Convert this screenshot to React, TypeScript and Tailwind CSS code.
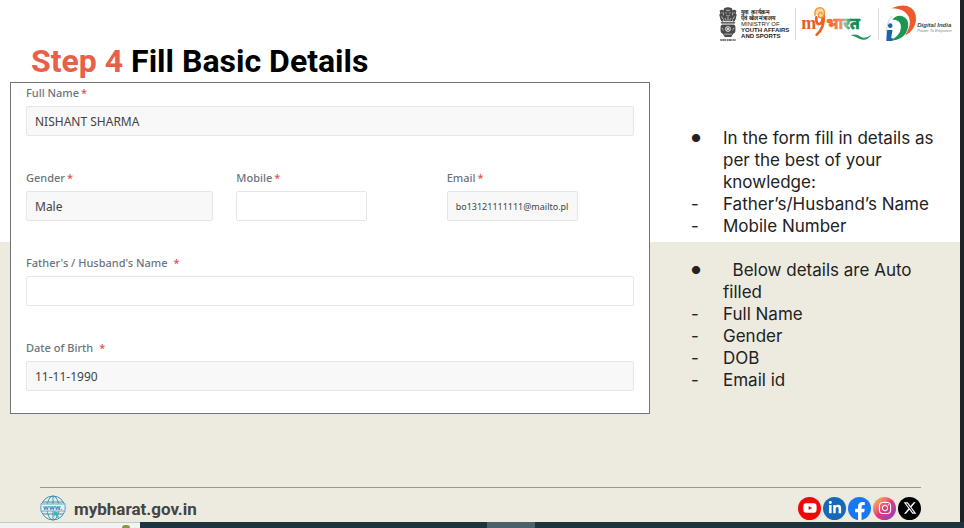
import React, { useState } from "react";
import { FaFacebookF, FaLinkedinIn, FaYoutube, FaInstagram } from "react-icons/fa";
import { FaXTwitter } from "react-icons/fa6";

const Emblem = () => (
  <svg viewBox="28 14 62 112" className="h-[37px] w-[20px]" fill="#4a4a4a" aria-hidden="true">
    <path d="M47 20q12-7 24 0l3 8-2 10 2 8-3 14H48l-4-14 2-8-2-10z" />
    <path d="M33 27q8-6 13 1l-2 10 3 8-3 16q-8-1-9-10l-3-12 3-4zM85 27q-8-6-13 1l2 10-3 8 3 16q8-1 9-10l3-12-3-4z" />
    <path d="M36 62h46l-3 7H39z" />
    <path d="M36 76q0-5 6-5h34q6 0 6 5v14q0 7-7 9l-6 10H49l-6-10q-7-2-7-9z" />
    <g fill="none" stroke="#eee" strokeWidth="2">
      <path d="M53 25q6 4 12 0M51 34h5M62 34h5M54 42q5 4 10 0M50 50l4 8M68 50l-4 8M59 47v12M38 33l4 2M80 33l-4 2M39 45l4 8M79 45l-4 8M37 66h44" />
      <circle cx="59" cy="84" r="8" />
      <path d="M59 76v16M51 84h16M53 78l12 12M65 78L53 90M40 80l5 8M78 80l-5 8M47 100h24" />
    </g>
    <path d="M35 118h48" stroke="#4a4a4a" strokeWidth="5" strokeDasharray="5 1 8 1 3 2" />
  </svg>
);

const MyBharat = () => (
  <svg viewBox="274 20 210 108" className="h-[36px] w-[70px]" role="img" aria-label="my भारत">
    <defs>
      <linearGradient id="bharat" x1="0" x2="1">
        <stop offset="0" stopColor="#ef5f24" />
        <stop offset="0.4" stopColor="#f08a5c" />
        <stop offset="0.58" stopColor="#8cc3a2" />
        <stop offset="0.75" stopColor="#17894c" />
      </linearGradient>
    </defs>
    <text x="272" y="90" fontSize="54" fontWeight="bold" fill="#e0602c" fontFamily="Liberation Serif, serif">m</text>
    <path d="M317 54q-1 22 9 20 9-2 10-18M339 46q3 40-21 60" fill="none" stroke="#ee5f24" strokeWidth="8" strokeLinecap="round" />
    <path d="M313 48q-3-20 13-23 17 0 15 18-3 14-14 12-8-5-1-14 8-5 8 3" fill="#fbd9a0" stroke="#f2922e" strokeWidth="4" strokeLinecap="round" />
    <text x="347" y="90" fontSize="47" fontWeight="bold" fill="url(#bharat)" stroke="url(#bharat)" strokeWidth="2" fontFamily="Noto Sans, sans-serif">भारत</text>
    <path d="M420 108q16-6 30 4 14 8 32-6-14 22-36 12-14-8-26-10z" fill="#25965a" />
  </svg>
);

const DigitalIndia = () => (
  <svg viewBox="518 10 98 120" className="h-[40px] w-[32px]" aria-hidden="true">
    <path d="M538 22q26-13 48-7 30 10 27 44-4 32-34 46 16-24 15-42-4-40-56-41z" fill="#ee5a2b" />
    <path d="M540 56q14-16 32-10 20 8 17 32-7 42-58 44 34-14 36-42 0-24-27-24z" fill="#19964f" />
    <path d="M524 88h17l-4 24 6 3-4 7h-17z" fill="#1b63ae" />
    <circle cx="534" cy="75" r="7" fill="#1b63ae" />
    <path d="M523 96q0-34 17-50" fill="none" stroke="#9dbfe0" strokeWidth="2" />
  </svg>
);

const Globe = () => (
  <svg viewBox="0 0 26 26" className="size-[26px]" fill="none" stroke="#3d93b8" aria-hidden="true">
    <circle cx="13" cy="13" r="12" />
    <ellipse cx="13" cy="13" rx="6" ry="12" />
    <path d="M13 1v24M3 7h20M3 19h20" />
    <rect x="1" y="9" width="24" height="7" fill="#edf5f2" stroke="#6aa9c6" />
    <text x="3" y="15" fontSize="8" fontWeight="bold" fill="#3f86b4" stroke="none" fontFamily="Roboto, sans-serif">www.</text>
    <path d="M14 16l5 2-2 1 2 3-1 1-3-3-1 2z" fill="#3fb3bf" stroke="none" />
  </svg>
);

const Field = ({ id, label, value, readOnly, narrow, small, spaced }: {
  id: string;
  label: string;
  value?: string;
  readOnly?: boolean;
  narrow?: boolean;
  small?: boolean;
  spaced?: boolean;
}) => {
  const [text, setText] = useState(value ?? "");

  return (
    <div className="flex flex-col gap-[3px]">
      <label htmlFor={id} className={`flex h-5 items-center text-[11px] font-medium text-[#6c757d] ${spaced ? "gap-1.5" : "gap-0.5"}`}>
        {label}
        <span className="text-[#d9534f]">*</span>
      </label>
      <input
        id={id}
        value={text}
        readOnly={readOnly}
        onChange={(e) => setText(e.target.value)}
        className={`h-[30px] rounded-xs border border-[#e6e6e6] px-2 text-[#444] ${readOnly ? "bg-[#f8f8f8]" : "bg-white"} ${narrow ? "w-[70%]" : "w-full"} ${small ? "text-[9px]" : "text-xs"}`}
      />
    </div>
  );
};

const Note = ({ mark, children }: { mark: string; children: React.ReactNode }) => (
  <li className="flex">
    <span className={`w-8 shrink-0 ${mark === "●" ? "text-[11px]" : ""}`}>{mark}</span>
    <span>{children}</span>
  </li>
);

const App = () => {
  return (
    <div className="flex min-h-screen flex-col bg-[#1d3340]">
      <div className="flex flex-1 flex-col border-r-4 border-[#202325] bg-[linear-gradient(#fff_242px,#edebe0_242px)]">
        <header className="flex h-[82px] items-start justify-between pr-2 pl-[31px]">
          <h1 className="pt-10 font-[Roboto,sans-serif] text-[32px] leading-[42px] font-bold text-black">
            <span className="text-[#e8604a]">Step 4</span> Fill Basic Details
          </h1>
          <div className="flex items-center gap-1.5 pt-1">
            <div className="flex items-center gap-[3px]">
              <Emblem />
              <p className="font-[Liberation_Sans,sans-serif] text-[6px] leading-[6px] font-bold text-[#222]">
                युवा कार्यक्रम<br />
                एवं खेल मंत्रालय<br />
                <span className="font-normal">MINISTRY OF</span><br />
                YOUTH AFFAIRS<br />
                AND SPORTS
              </p>
            </div>
            <div className="h-8 w-px bg-[#ddd]" />
            <MyBharat />
            <div className="h-8 w-px bg-[#ddd]" />
            <div className="flex items-center">
              <DigitalIndia />
              <p className="pt-2 font-[Liberation_Sans,sans-serif] text-[6px] leading-[5px] font-bold text-[#444] italic">
                Digital India<br />
                <span className="text-[4px] font-normal text-[#888]">Power To Empower</span>
              </p>
            </div>
          </div>
        </header>

        <main className="grid grid-cols-[640fr_310fr] items-start pl-2.5">
          <form className="flex flex-col gap-8 border border-[#707478] bg-white px-[15px] pb-[22px] font-[Noto_Sans,sans-serif]">
            <Field id="fullName" label="Full Name" value="NISHANT SHARMA" readOnly />
            <div className="grid grid-cols-3 gap-[23px]">
              <Field id="gender" label="Gender" value="Male" readOnly />
              <Field id="mobile" label="Mobile" narrow />
              <Field id="email" label="Email" value="bo13121111111@mailto.plus" readOnly narrow small />
            </div>
            <Field id="fatherName" label="Father's / Husband's Name" spaced />
            <Field id="dob" label="Date of Birth" value="11-11-1990" readOnly spaced />
          </form>

          <aside className="flex flex-col gap-[22px] pt-[45px] pr-5 pl-[41px] font-[Inter,sans-serif] text-[17px] leading-[22px] text-[#222]">
            <ul>
              <Note mark="●">In the form fill in details as per the best of your knowledge:</Note>
              <Note mark="-">Father’s/Husband’s Name</Note>
              <Note mark="-">Mobile Number</Note>
            </ul>
            <ul>
              <Note mark="●">&nbsp; Below details are Auto filled</Note>
              <Note mark="-">Full Name</Note>
              <Note mark="-">Gender</Note>
              <Note mark="-">DOB</Note>
              <Note mark="-">Email id</Note>
            </ul>
          </aside>
        </main>

        <footer className="mt-auto mr-[39px] ml-10 flex h-[35px] items-center justify-between border-t border-[#999890] pt-1.5">
          <a href="https://mybharat.gov.in" className="flex items-center gap-2 font-[Roboto,sans-serif] text-[17px] font-bold text-[#444]">
            <Globe />
            <span className="pt-1">mybharat.gov.in</span>
          </a>
          <nav className="flex gap-0.5 text-white">
            <a href="#youtube" aria-label="YouTube" className="flex size-[23px] items-center justify-center rounded-full bg-[#f00808]"><FaYoutube size={14} /></a>
            <a href="#linkedin" aria-label="LinkedIn" className="flex size-[23px] items-center justify-center rounded-full bg-[#1868b8]"><FaLinkedinIn size={14} /></a>
            <a href="#facebook" aria-label="Facebook" className="flex size-[23px] items-end justify-center rounded-full bg-[#1877f2]"><FaFacebookF size={18} /></a>
            <a href="#instagram" aria-label="Instagram" className="flex size-[23px] items-center justify-center rounded-full bg-linear-to-br from-[#fdc63a] via-[#e2337a] to-[#7a35c9]"><FaInstagram size={14} /></a>
            <a href="#x" aria-label="X" className="flex size-[23px] items-center justify-center rounded-full bg-black"><FaXTwitter size={14} /></a>
          </nav>
        </footer>
      </div>

      <div className="flex h-1.5">
        <div className="flex w-[14.5%] items-end justify-end border-t border-[#c9c9c4] bg-[#f2f3f3] pr-2.5">
          <div className="h-[3px] w-2 rounded-t-full bg-[#8f9440]" />
        </div>
        <div className="w-[36%]" />
        <div className="w-[5%] bg-[#4c606b]" />
      </div>
    </div>
  );
};

export default App;
